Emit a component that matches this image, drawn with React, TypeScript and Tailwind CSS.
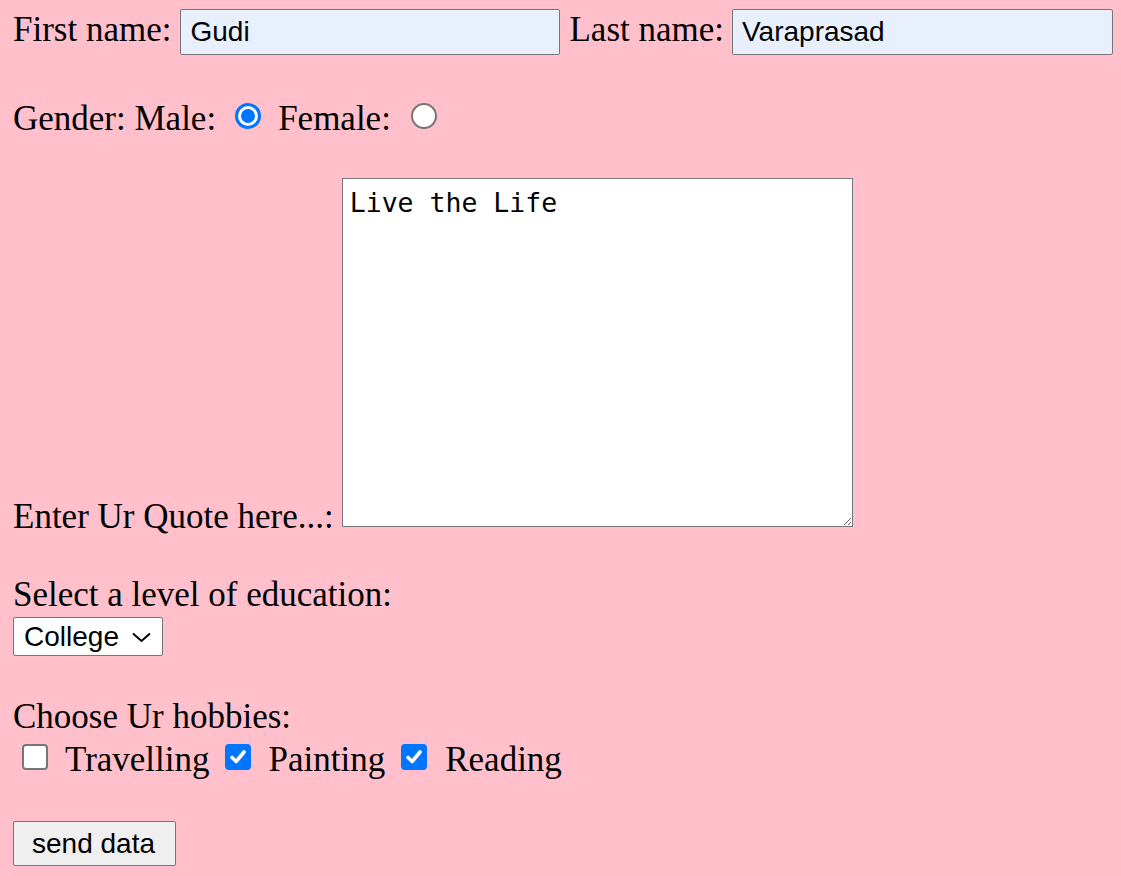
import React from "react";

function Radio({ checked }: { checked?: boolean }) {
  if (checked) {
    return (
      <span className="flex h-[26px] w-[26px] shrink-0 items-center justify-center rounded-full bg-[#0075ff]">
        <span className="flex h-[20px] w-[20px] items-center justify-center rounded-full bg-white">
          <span className="h-[14px] w-[14px] rounded-full bg-[#0075ff]" />
        </span>
      </span>
    );
  }
  return <span className="block h-[26px] w-[26px] shrink-0 rounded-full border-[2px] border-[#767676] bg-white" />;
}

function Checkbox({ checked }: { checked?: boolean }) {
  if (checked) {
    return (
      <span className="flex h-[26px] w-[26px] shrink-0 items-center justify-center rounded-[4px] bg-[#0075ff]">
        <svg width="20" height="20" viewBox="0 0 20 20">
          <path d="M4 10.5 L8.2 14.5 L16 5" fill="none" stroke="white" strokeWidth="3.6" strokeLinecap="round" strokeLinejoin="round" />
        </svg>
      </span>
    );
  }
  return <span className="block h-[26px] w-[26px] shrink-0 rounded-[4px] border-[2px] border-[#767676] bg-white" />;
}

export default function App() {
  return (
    <div className="min-h-screen bg-[#ffc0cb] pl-[13px] pt-[9px] font-['Liberation_Serif','Times_New_Roman',serif] text-[35px] leading-[40px] text-black">
      {/* names */}
      <div className="flex items-baseline">
        <span>First name:</span>
        <input
          readOnly
          value="Gudi"
          className="ml-[9px] h-[46px] w-[380px] rounded-[2px] border border-[#767676] bg-[#e8f0fe] px-[9px] font-['Liberation_Sans',Arial,sans-serif] text-[28px] text-black outline-none"
        />
        <span className="ml-[9px]">Last name:</span>
        <input
          readOnly
          value="Varaprasad"
          className="ml-[8px] h-[46px] w-[381px] rounded-[2px] border border-[#767676] bg-[#e8f0fe] px-[9px] font-['Liberation_Sans',Arial,sans-serif] text-[28px] text-black outline-none"
        />
      </div>

      {/* gender */}
      <div className="mt-[44px] flex h-[40px] items-start">
        <span>Gender: Male:</span>
        <span className="ml-[19px] mt-[4px]">
          <Radio checked />
        </span>
        <span className="ml-[17px]">Female:</span>
        <span className="ml-[20px] mt-[4px]">
          <Radio />
        </span>
      </div>

      {/* quote */}
      <div className="mt-[39px] flex items-end">
        <span className="mb-[-4px] leading-[28px]">Enter Ur Quote here...:</span>
        <textarea
          readOnly
          defaultValue="Live the Life"
          className="ml-[8px] h-[349px] w-[511px] border border-[#767676] bg-white px-[7px] pt-[9px] font-['DejaVu_Sans_Mono','Liberation_Mono',monospace] text-[26.5px] leading-[30px] text-black outline-none"
        />
      </div>

      {/* education */}
      <div className="mt-[48px]">Select a level of education:</div>
      <div className="mt-[2px] flex h-[39px] w-[150px] items-center rounded-[2px] border border-[#767676] bg-white pl-[10px] font-['Liberation_Sans',Arial,sans-serif] text-[28px] leading-[32px]">
        <span>College</span>
        <svg className="ml-[12px]" width="21" height="12" viewBox="0 0 21 12">
          <path d="M2 2.5 L10.5 10 L19 2.5" fill="none" stroke="black" strokeWidth="2" />
        </svg>
      </div>

      {/* hobbies */}
      <div className="mt-[41px]">Choose Ur hobbies:</div>
      <div className="mt-[3px] flex h-[40px] items-start">
        <span className="ml-[9px] mt-[4px]">
          <Checkbox />
        </span>
        <span className="ml-[17px]">Travelling</span>
        <span className="ml-[15px] mt-[4px]">
          <Checkbox checked />
        </span>
        <span className="ml-[18px]">Painting</span>
        <span className="ml-[16px] mt-[4px]">
          <Checkbox checked />
        </span>
        <span className="ml-[18px]">Reading</span>
      </div>

      {/* button */}
      <button className="mt-[41px] flex h-[45px] w-[163px] items-center justify-center rounded-[2px] border border-[#767676] bg-[#efefef] pr-[2px] font-['Liberation_Sans',Arial,sans-serif] text-[28px] leading-[32px] text-black">
        send data
      </button>
    </div>
  );
}
